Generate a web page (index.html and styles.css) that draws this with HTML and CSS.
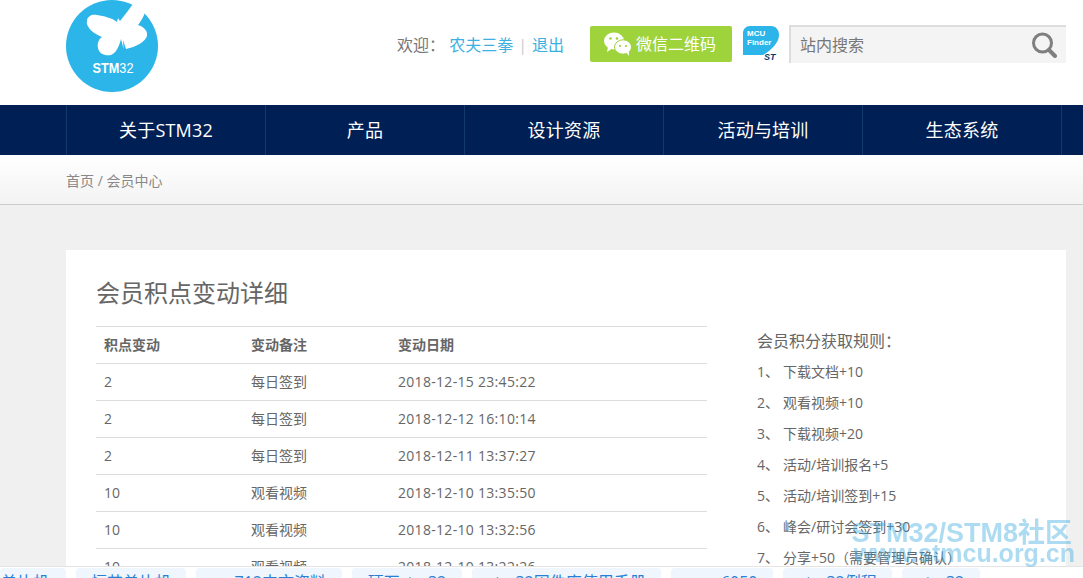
FILE: index.html
```html
<!DOCTYPE html>
<html lang="zh-CN">
<head>
  <meta charset="UTF-8">
  <title>会员积点变动详细</title>
  <link rel="stylesheet" href="styles.css">
</head>
<body>
  <!-- Header -->
  <header class="header">
    <div class="wrap header__inner">
      <a class="logo" href="#">
        <svg width="92" height="92" viewBox="0 0 92 92">
          <circle cx="46" cy="46" r="46" fill="#2cb5e8"/>
          <path fill="#fff" d="M21 20C22 16 26 14 31 15C38 16 46 18 51 22L52 18L54 21C59 15 64 8 70 0L80 8C79 15 75 21 72 25C78 27 82 31 81 36C79 42 70 47 60 49L57 40L57.500 49L55 39C53 47 50 53 45 55C39 56 33 54 32 48C31 43 33 39 36 37C29 34 19 28 21 20Z"/>
          <text class="logo__text" x="26.500" y="73" textLength="41" lengthAdjust="spacingAndGlyphs"><tspan class="logo__bold">STM</tspan>32</text>
        </svg>
      </a>
      <div class="userbar">
        <span class="welcome">欢迎： <a href="#">农夫三拳</a><i>|</i><a href="#">退出</a></span>
        <a class="wechat" href="#">
          <svg width="30" height="26" viewBox="0 0 30 26">
            <ellipse cx="11" cy="10" rx="10" ry="8.500" fill="#fff"/>
            <path fill="#fff" d="M5 16L4 21L10 17Z"/>
            <ellipse cx="20" cy="16" rx="8.500" ry="7.200" stroke="#9fd33c" fill="#fff"/>
            <path fill="#fff" d="M23 21L26 25L26 20Z"/>
            <circle cx="7.500" cy="7.500" r="1.300" fill="#9fd33c"/>
            <circle cx="14" cy="7.500" r="1.300" fill="#9fd33c"/>
            <circle cx="17" cy="15" r="1.100" fill="#9fd33c"/>
            <circle cx="23" cy="15" r="1.100" fill="#9fd33c"/>
          </svg>
          <span>微信二维码</span>
        </a>
        <a class="finder" href="#">
          <svg width="37" height="36" viewBox="0 0 37 36">
            <path fill="#2cb5e8" d="M7 0H28C33 0 36 4 36 9C36 16 29 24 20 29H0V7C0 3 3 0 7 0Z"/>
            <text class="finder__text" x="4" y="10">MCU</text>
            <text class="finder__text" x="4" y="19">Finder</text>
            <text class="finder__st" x="21" y="34">ST</text>
          </svg>
        </a>
        <div class="search">
          <span>站内搜索</span>
          <svg width="26" height="26" viewBox="0 0 26 26">
            <circle cx="11.500" cy="11" r="9" fill="none" stroke="#7f7f7f" stroke-width="3"/>
            <path d="M18 18L24 24" stroke="#7f7f7f" stroke-width="4" stroke-linecap="round"/>
          </svg>
        </div>
      </div>
    </div>
  </header>

  <!-- Nav -->
  <nav class="nav">
    <div class="wrap nav__inner">
      <a href="#">关于STM32</a>
      <a href="#">产品</a>
      <a href="#">设计资源</a>
      <a href="#">活动与培训</a>
      <a href="#">生态系统</a>
    </div>
  </nav>

  <div class="crumbs">
    <div class="wrap">首页 / 会员中心</div>
  </div>

  <main class="main">
    <div class="wrap panel">
      <section class="detail">
        <h1>会员积点变动详细</h1>
        <table class="points">
          <tr><th>积点变动</th><th>变动备注</th><th>变动日期</th></tr>
          <tr><td>2</td><td>每日签到</td><td>2018-12-15 23:45:22</td></tr>
          <tr><td>2</td><td>每日签到</td><td>2018-12-12 16:10:14</td></tr>
          <tr><td>2</td><td>每日签到</td><td>2018-12-11 13:37:27</td></tr>
          <tr><td>10</td><td>观看视频</td><td>2018-12-10 13:35:50</td></tr>
          <tr><td>10</td><td>观看视频</td><td>2018-12-10 13:32:56</td></tr>
          <tr><td>10</td><td>观看视频</td><td>2018-12-10 13:22:26</td></tr>
        </table>
      </section>
      <aside class="rules">
        <h2>会员积分获取规则：</h2>
        <p><b>1、</b>下载文档+10</p>
        <p><b>2、</b>观看视频+10</p>
        <p><b>3、</b>下载视频+20</p>
        <p><b>4、</b>活动/培训报名+5</p>
        <p><b>5、</b>活动/培训签到+15</p>
        <p><b>6、</b>峰会/研讨会签到+30</p>
        <p><b>7、</b>分享+50（需要管理员确认）</p>
      </aside>
    </div>
  </main>

  <!-- 底部关键词 -->
  <div class="tags">
    <a class="tag tag--1" href="#">意法单片机</a>
    <a class="tag tag--2" href="#">恒芯单片机</a>
    <a class="tag tag--3" href="#">sm712中文资料</a>
    <a class="tag tag--4" href="#">硬石stm32</a>
    <a class="tag tag--5" href="#">stm32固件库使用手册</a>
    <a class="tag tag--6" href="#">mpu6050</a>
    <a class="tag tag--7" href="#">stm32例程</a>
    <a class="tag tag--8" href="#">stm32</a>
  </div>

  <div class="watermark">
    <div class="watermark__name">STM32/STM8社区</div>
    <div class="watermark__url">www.stmcu.org.cn</div>
  </div>
</body>
</html>
```

FILE: styles.css
```css
html, body {
  height: 100%;
}

body {
  margin: 0;
  overflow: hidden;
  background: #f0f0f0;
  color: #666;
  font-family: "Open Sans", "Noto Sans CJK SC", sans-serif;
  text-spacing-trim: space-all;
  position: relative;
}

a {
  text-decoration: none;
}

.wrap {
  width: 1000px;
  margin-left: 66px;
  box-sizing: border-box;
}

/* Header */
.header {
  height: 105px;
  background: #fff;
}

.header__inner {
  display: flex;
  justify-content: space-between;
}

.logo {
  display: block;
  height: 92px;
}

.logo svg {
  display: block;
}

.logo__text {
  fill: #fff;
  font: 15px "Liberation Sans", sans-serif;
}

.logo__bold {
  font-weight: 700;
}

.userbar {
  display: flex;
  align-items: center;
  height: 38px;
  margin-top: 25px;
}

.welcome {
  font-size: 16px;
  color: #777;
  margin-right: 26px;
  padding-bottom: 1px;
}

.welcome a {
  color: #3cb0e0;
}

.welcome i {
  color: #ccc;
  font-style: normal;
  margin: 0 5px;
}

.wechat {
  display: flex;
  align-items: center;
  gap: 3px;
  width: 142px;
  height: 36px;
  padding-left: 13px;
  box-sizing: border-box;
  margin-right: 11px;
  background: #9fd33c;
  border-radius: 2px;
  color: #fff;
  font-size: 16px;
}

.wechat span {
  padding-bottom: 2px;
}

.finder {
  display: block;
  height: 36px;
  margin-right: 9px;
}

.finder svg {
  display: block;
}

.finder__text {
  fill: #fff;
  font: 700 8px "Liberation Sans", sans-serif;
}

.finder__st {
  fill: #0a3a6b;
  font: italic 700 9px "Liberation Sans", sans-serif;
}

.search {
  display: flex;
  align-items: center;
  justify-content: space-between;
  width: 277px;
  height: 38px;
  padding: 0 9px;
  box-sizing: border-box;
  background: #f4f4f4;
  border-top: 2px solid #ddd;
  border-left: 2px solid #ddd;
  color: #777;
  font-size: 16px;
}

.search span {
  padding-bottom: 3px;
}

/* Nav */
.nav {
  height: 50px;
  background: #001f54;
}

.nav__inner {
  display: flex;
  width: 996px;
  border-right: 1px solid #12386c;
}

.nav__inner a {
  flex: 1;
  line-height: 50px;
  text-align: center;
  color: #fff;
  font-size: 18px;
  letter-spacing: 0.2px;
  border-left: 1px solid #12386c;
}

/* Breadcrumb */
.crumbs {
  height: 49px;
  line-height: 51px;
  font-size: 14px;
  color: #888;
  background: linear-gradient(#fff, #f3f3f3);
  border-bottom: 1px solid #ccc;
}

/* Content */
.main {
  padding-top: 45px;
}

.panel {
  display: flex;
  background: #fff;
  padding: 0 30px;
}

.detail {
  width: 611px;
  margin-right: 50px;
}

.detail h1 {
  margin: 27px 0 17px;
  font-size: 24px;
  line-height: 32px;
  font-weight: 400;
  color: #666;
}

.points {
  width: 100%;
  border-collapse: collapse;
  font-size: 14px;
  table-layout: fixed;
}

.points th,
.points td {
  height: 34px;
  padding: 0 8px 2px;
  text-align: left;
  border-top: 1px solid #ddd;
}

.points th {
  font-weight: 700;
}

.points td:first-child,
.points th:first-child {
  width: 131px;
}

.points td:nth-child(2),
.points th:nth-child(2) {
  width: 131px;
}

.points td:nth-child(3) {
  letter-spacing: 0.3px;
}

.rules {
  padding-top: 77px;
  font-size: 14px;
}

.rules h2 {
  margin: 0 0 4px;
  font-size: 16px;
  line-height: 28px;
  font-weight: 400;
}

.rules p {
  margin: 0;
  height: 31px;
  line-height: 26px;
}

.rules b {
  display: inline-block;
  width: 26px;
  font-weight: 400;
}

/* Bottom tag bar */
.tags {
  position: fixed;
  left: 0;
  right: 0;
  bottom: 0;
  height: 10px;
  overflow: hidden;
  display: flex;
  padding-top: 1px;
  gap: 10px;
  background: #fff;
  border-top: 1px solid #e4e4e4;
}

.tag {
  height: 30px;
  line-height: 28px;
  text-align: center;
  border-radius: 4px;
  background: #eff6fd;
  color: #2a7fd5;
  font-size: 16px;
  flex: none;
}

.tag--1 { width: 66px; text-indent: -48px; white-space: nowrap; }
.tag--2 { width: 110px; }
.tag--3 { width: 146px; }
.tag--4 { width: 110px; }
.tag--5 { width: 189px; }
.tag--6 { width: 102px; }
.tag--7 { width: 109px; }
.tag--8 { width: 78px; }

.watermark {
  position: fixed;
  right: 8px;
  bottom: 12px;
  text-align: right;
  color: rgba(60, 170, 225, 0.42);
  font-family: "Liberation Sans", "Noto Sans CJK SC", sans-serif;
  font-weight: 700;
  line-height: 1;
}

.watermark__name {
  font-size: 27px;
  margin: 0 3px -6px 0;
}

.watermark__url {
  font-size: 25px;
}
```
